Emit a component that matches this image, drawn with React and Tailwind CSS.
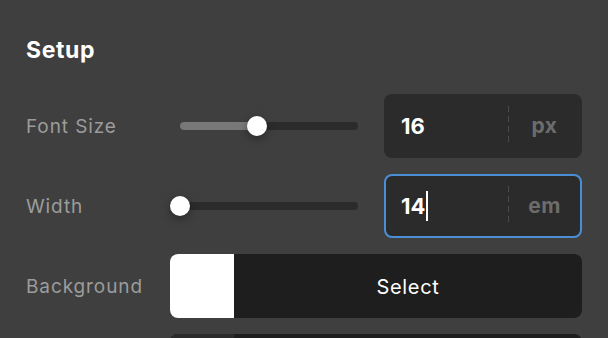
import React from "react";

function Slider({ value }) {
  return (
    <div className="relative h-5 w-full">
      <div className="absolute left-[10px] right-[10px] top-[6px] h-2 rounded-full bg-[#2b2b2b] overflow-hidden">
        <div className="h-full bg-[#787878]" style={{ width: value }} />
      </div>
      <div
        className="absolute top-0 h-5 w-5 rounded-full bg-white shadow-[0_3px_8px_rgba(0,0,0,0.35)]"
        style={{ left: value }}
      />
    </div>
  );
}

function NumberInput({ value, unit, focused }) {
  return (
    <div
      className={
        focused
          ? "flex h-16 items-center rounded-lg bg-[#2b2b2b] border-2 border-[#4a8fd6]"
          : "flex h-16 items-center rounded-lg bg-[#2b2b2b] border-2 border-transparent"
      }
    >
      <div className="flex flex-1 items-center pl-[15px] text-[22px] font-bold text-white">
        <span>{value}</span>
        {focused && <span className="ml-px h-[30px] w-[2px] bg-white" />}
      </div>
      <div className="h-10 w-px bg-[repeating-linear-gradient(to_bottom,#4c4c4c_0_6px,transparent_6px_10px)]" />
      <div className="flex w-[71px] justify-center text-[21px] font-bold tracking-[0.4px] text-[#6c6c6c]">{unit}</div>
    </div>
  );
}

function ColorButton({ swatch, label }) {
  return (
    <div className="flex h-16 overflow-hidden rounded-lg bg-[#1e1e1e]">
      <div className={"w-16 " + swatch} />
      <div className="flex flex-1 items-center justify-center pt-px text-[20px] font-normal tracking-[0.7px] text-white">
        {label}
      </div>
    </div>
  );
}

const labelCls = "pt-[3px] text-[19px] tracking-[0.9px] text-[#9c9c9c]";

export default function App() {
  return (
    <div
      className="h-[338px] w-[608px] overflow-hidden bg-[#3f3f3f] px-[26px] pt-[34px]"
      style={{ fontFamily: "Inter, 'Noto Sans', sans-serif" }}
    >
      <h2 className="mt-px text-[23px] font-bold leading-[30px] tracking-[0.6px] text-white">Setup</h2>
      <div className="mt-[29px] grid grid-cols-[128px_198px_198px] gap-x-4 gap-y-4 items-center">
        <div className={labelCls}>Font Size</div>
        <Slider value={77} />
        <NumberInput value="16" unit="px" />

        <div className={labelCls}>Width</div>
        <Slider value={0} />
        <NumberInput value="14" unit="em" focused />

        <div className={labelCls}>Background</div>
        <div className="col-span-2">
          <ColorButton swatch="bg-white" label="Select" />
        </div>

        <div />
        <div className="col-span-2">
          <ColorButton swatch="bg-[#2b2b2b]" label="" />
        </div>
      </div>
    </div>
  );
}
